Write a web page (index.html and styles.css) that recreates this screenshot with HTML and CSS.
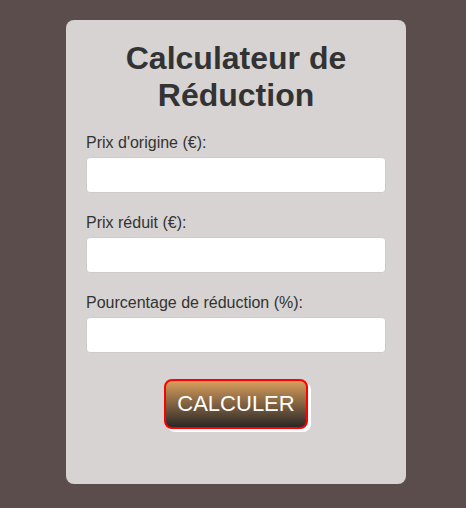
FILE: index.html
```html
<!DOCTYPE html>
<html lang="fr">
<head>
<meta charset="utf-8">
<title>Calculateur de Réduction</title>
<link rel="stylesheet" href="styles.css">
</head>
<body>
<div class="card">
  <h1 class="title">Calculateur de Réduction</h1>
  <form class="form">
    <div class="group">
      <label class="label" for="orig">Prix d'origine (€):</label>
      <input class="input" id="orig" type="number">
    </div>
    <div class="group">
      <label class="label" for="red">Prix réduit (€):</label>
      <input class="input" id="red" type="number">
    </div>
    <div class="group">
      <label class="label" for="pct">Pourcentage de réduction (%):</label>
      <input class="input" id="pct" type="number">
    </div>
    <div class="actions">
      <button class="btn" type="button">CALCULER</button>
    </div>
    <div class="result"></div>
  </form>
</div>
</body>
</html>
```

FILE: styles.css
```css
html, body {
  margin: 0;
  padding: 0;
}
body {
  background: #5c4d4d;
  font-family: "Liberation Sans", Arial, sans-serif;
  color: #333;
  display: flex;
  justify-content: center;
  padding: 20px 0 0 6px;
  min-height: 508px;
  box-sizing: border-box;
}
.card {
  width: 340px;
  box-sizing: border-box;
  background: #d6d3d2;
  border-radius: 8px;
  padding: 20px;
  height: 464px;
}
.title {
  margin: 0 0 20px;
  font-size: 32px;
  font-weight: bold;
  text-align: center;
  color: #333;
  line-height: normal;
}
.form {
  margin: 0;
}
.group {
  margin-bottom: 21px;
}
.label {
  display: block;
  font-size: 16px;
  line-height: 18px;
  margin-bottom: 5px;
  color: #333;
}
.input {
  display: block;
  width: 100%;
  height: 36px;
  box-sizing: border-box;
  border: 1px solid #ccc;
  border-radius: 4px;
  background: #fff;
  padding: 8px;
  font-size: 16px;
  font-family: inherit;
}
.actions {
  text-align: center;
  padding-top: 5px;
}
.btn {
  font-family: "Liberation Sans", Arial, sans-serif;
  font-size: 22px;
  color: #fff;
  padding: 10px 11px;
  border: 2px solid #f00;
  border-radius: 8px;
  background: linear-gradient(to bottom, #d89d5c, #2a2827);
  box-shadow: 3px 3px 0 #fff;
  line-height: normal;
  cursor: pointer;
}
.result {
  margin-top: 20px;
  min-height: 16px;
}
```
